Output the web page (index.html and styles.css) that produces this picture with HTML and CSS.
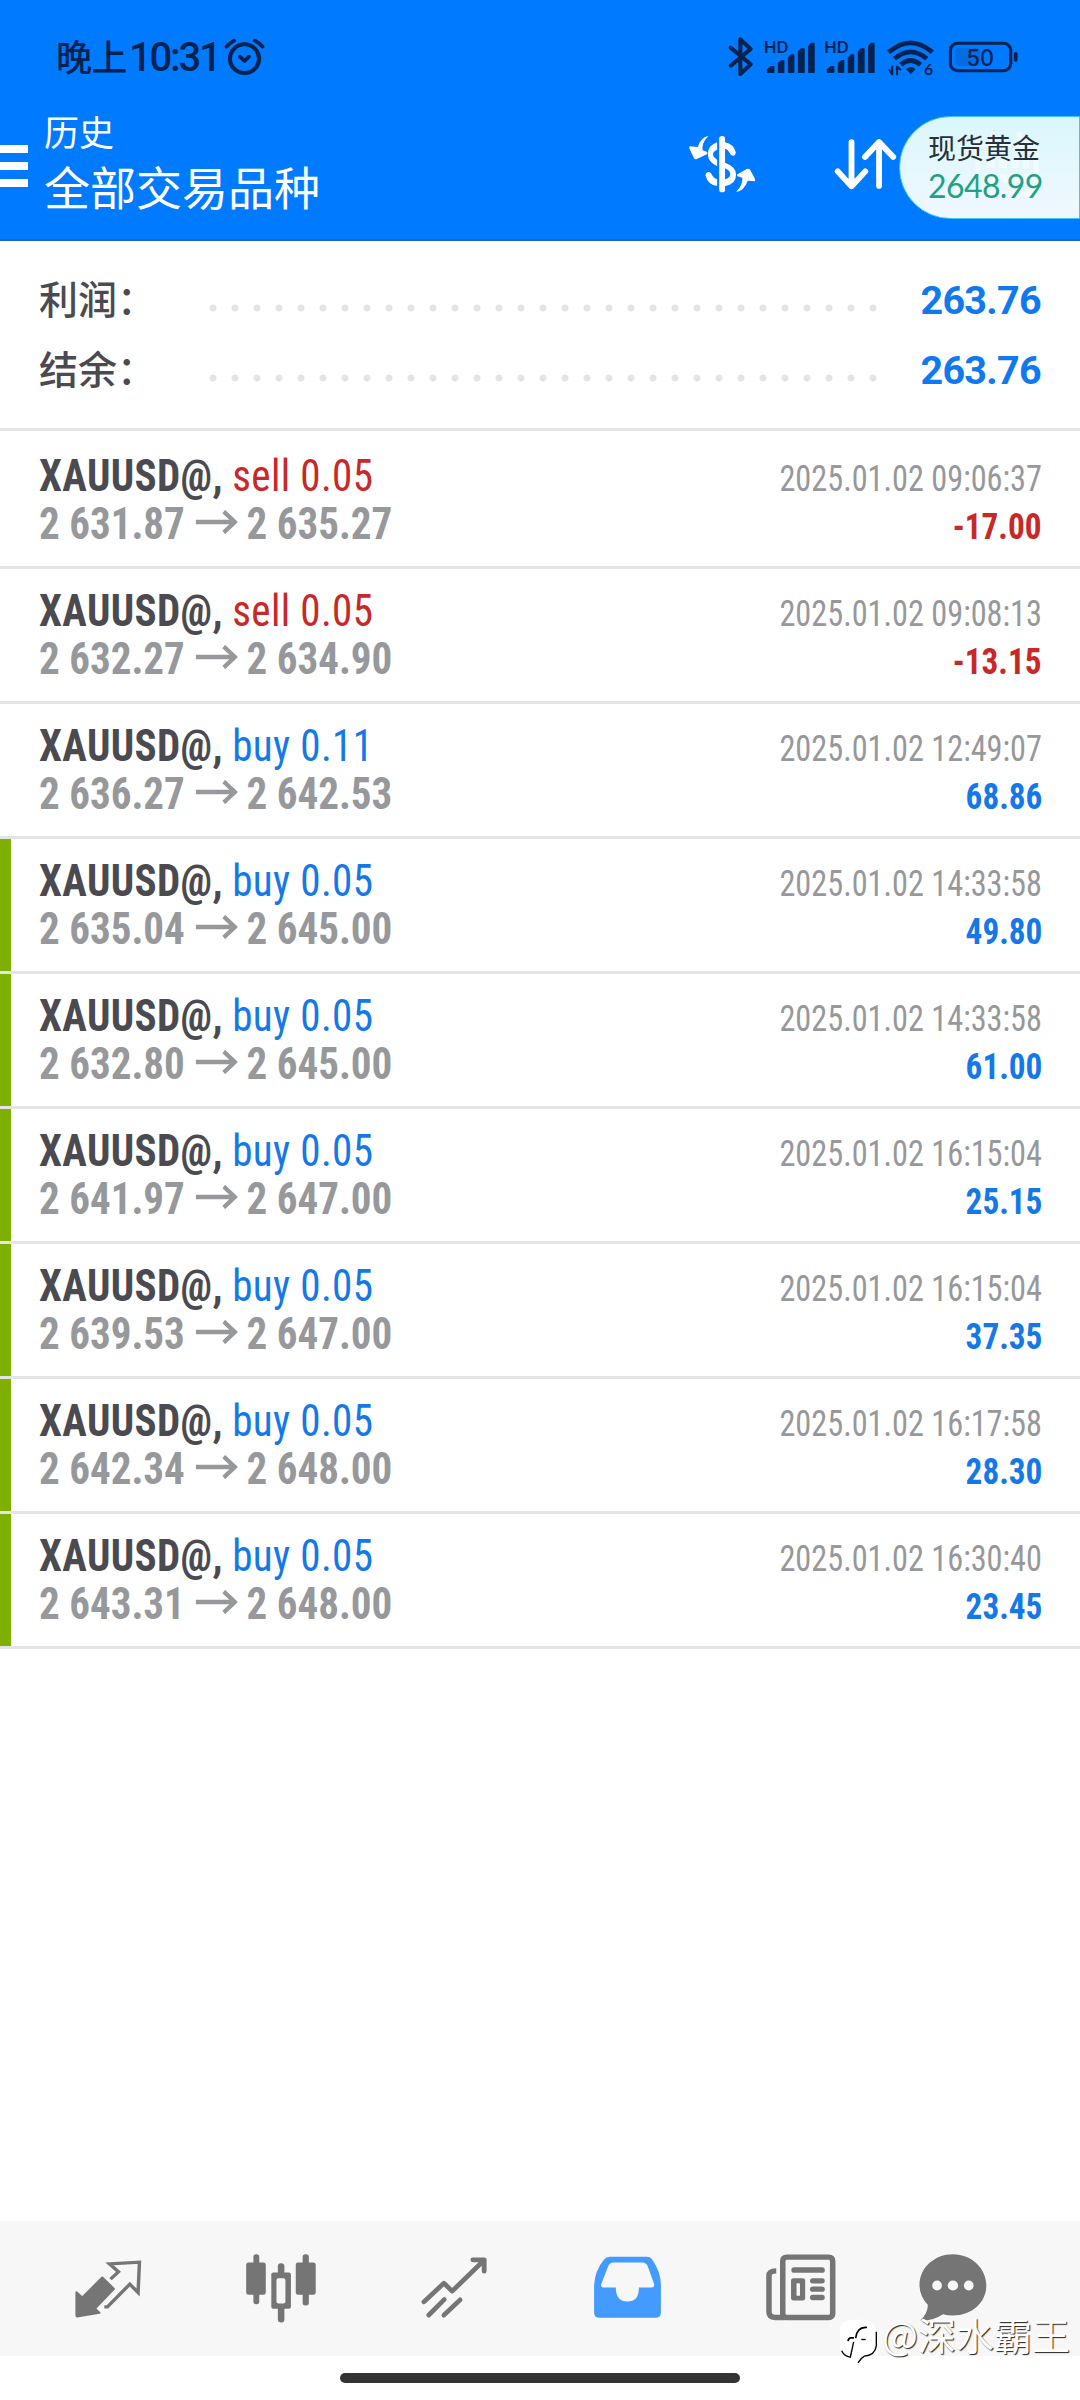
FILE: index.html
```html
<!DOCTYPE html>
<html lang="zh-CN">
<head>
<meta charset="utf-8">
<title>历史</title>
<link rel="stylesheet" href="styles.css">
</head>
<body>
<header class="header">
  <div class="status">
    <div class="clock">晚上<span class="time">10:31</span></div>
    <svg class="alarm" viewBox="645 105 130 132" preserveAspectRatio="none"><g fill="none" stroke="#02234f" stroke-linecap="round" stroke-linejoin="round"><ellipse cx="710" cy="176" rx="42" ry="43" stroke-width="12"/><path d="M697 170l13 13 13-13" stroke-width="11"/><path d="M658 140q9-11 22-18M762 140q-9-11-22-18" stroke-width="11"/></g></svg>
    <svg class="sysicons" viewBox="523 90 900 165" preserveAspectRatio="none">
      <g fill="none" stroke="#02234f" stroke-width="12" stroke-linejoin="round" stroke-linecap="round"><path d="M554 143l58 50-30 29v-104l30 29-58 50"/></g>
      <g fill="#02234f" stroke="#02234f" stroke-width="4" stroke-linejoin="round">
        <path id="sig" d="M661 217v-8l10-9h8v17zM693 217v-27l9-8h6v35zM722 217v-44l8-8h7v52zM751 217v-62l8-8h8v70zM781 217v-78l7-9h8v87z"/>
        <use href="#sig" x="174"/>
      </g>
      <g fill="#02234f" class="hd"><text x="651" y="159" textLength="71" lengthAdjust="spacingAndGlyphs">HD</text><text x="826" y="159" textLength="71" lengthAdjust="spacingAndGlyphs">HD</text></g>
      <g fill="none" stroke="#02234f" stroke-width="14"><path d="M1013 157q63-57 127 0M1030 176q46-41 93 0M1048 194q28-25 57 0"/></g>
      <path fill="#02234f" d="M1063 208q14-14 28 0l-14 14zM1010 208h6l4 5v-16h6v29h-5zM1034 226v-29h5l12 12-4 3-7-5v19z"/>
      <text class="six" x="1115" y="225" fill="#02234f">6</text>
      <rect x="1192" y="130" width="175" height="82" rx="21" fill="none" stroke="#02234f" stroke-width="9"/>
      <rect x="1207" y="144" width="70" height="54" rx="9" fill="#046de2"/>
      <rect x="1376" y="156" width="11" height="29" rx="5" fill="#02234f"/>
      <text class="batt" x="1239" y="197" fill="#02234f" textLength="80" lengthAdjust="spacingAndGlyphs">50</text>
    </svg>
  </div>
  <div class="appbar">
    <div class="menu"><i></i><i></i><i></i></div>
    <div class="titles"><div class="sub">历史</div><div class="main">全部交易品种</div></div>
    <svg class="hicon" viewBox="412 372 232.3 240" preserveAspectRatio="none"><g fill="#fff">
      <path d="M489 408q-22 3-31 33l-24-2q-2 3 0 8l13 28q3 4 8 2l29-14q4-4 0-8l-12-4q-4-22 17-43z"/>
      <path d="M569 576q23-4 34-34l21 2q1-3-1-9l-14-27q-3-3-9-1l-27 16q-3 3 0 6l14 4q3 20-18 43z"/>
      <rect x="520" y="408" width="17" height="169" rx="8"/>
      <path d="M514 427v22q-12 5-12 14t12 16v19q-27-12-27-36 0-25 27-35zM514 538v20q-26-2-34-32 0-8 7-10 8-1 11 6 4 12 16 16zM537 427q24 5 31 29 0 11-8 11-6 0-9-7-5-12-14-14zM537 488q32 12 32 36 0 28-32 34v-20q15-4 15-15 0-12-15-18z"/>
    </g></svg>
    <svg class="hicon" viewBox="827 372 232.3 240" preserveAspectRatio="none"><g fill="none" stroke="#fff" stroke-width="17" stroke-linecap="round" stroke-linejoin="round"><path d="M904 426v132M864 514l40 45 40-45M984 558v-132M943 471l41-45 41 45"/></g></svg>
  </div>
  <div class="pill">
    <svg class="ghost" viewBox="0 0 64 66"><path fill="none" stroke="#fff" stroke-width="5" d="M3 12h58v50H3zM18 0v12M44 0v12"/><path fill="none" stroke="#fff" stroke-width="8" stroke-dasharray="8 4" d="M12 32h42M12 46h42"/></svg>
    <div class="pname">现货黄金</div><div class="pval">2648.99</div>
  </div>
</header>
<section class="totals">
  <div class="total"><span class="label">利润：</span><span class="dots"></span><span class="sum">263.76</span></div>
  <div class="total"><span class="label">结余：</span><span class="dots"></span><span class="sum">263.76</span></div>
</section>
<main class="deals" id="deals"></main>
<nav class="nav">
  <svg viewBox="197.5 145.5 232.3 240" preserveAspectRatio="none"><path fill="#757575" stroke="#757575" stroke-width="6" stroke-linejoin="round" d="M297 231l34 34-55 59 13 13-65 11q-2 0-2-4v-69l17 16z"/><path fill="none" stroke="#757575" stroke-width="10" d="M321 236l23-22-26-24 87-5-4 91-24-25-65 68h-9"/></svg>
  <svg viewBox="700 145.5 232.3 240" preserveAspectRatio="none"><g fill="#757575"><rect x="715" y="186" width="57" height="97" rx="7"/><rect x="736" y="161" width="17" height="150" rx="8"/><rect x="859" y="186" width="58" height="97" rx="7"/><rect x="879" y="161" width="18" height="154" rx="8"/><rect x="788" y="216" width="57" height="109" rx="6"/><rect x="807" y="188" width="19" height="178" rx="9"/></g><rect x="803" y="233" width="26" height="76" rx="6" fill="#f7f7f7"/></svg>
  <svg viewBox="1202.2 145.5 232.3 240" preserveAspectRatio="none"><g fill="none" stroke="#757575" stroke-width="14" stroke-linecap="round" stroke-linejoin="round"><path d="M1231 304l58-56 24 24 93-93M1373 178h33v34"/><path d="M1245 344l45-47M1289 344l47-46"/></g></svg>
  <svg viewBox="136.4 145.5 232.3 240" preserveAspectRatio="none"><path fill="#439bff" fill-rule="evenodd" d="M203 169h107q10 0 14 6 27 38 27 80v81q0 16-16 16H173q-16 0-16-16v-81q2-45 29-78 6-8 17-8zM214 186q-11 0-15 9l-21 55q-3 11 7 11h35q0 42 34 42t33-42h35q12 0 9-11l-18-52q-4-12-17-12z"/></svg>
  <svg viewBox="638.9 145.5 232.3 240" preserveAspectRatio="none"><g fill="none" stroke="#757575"><path stroke-width="16" d="M717 170h121q12 0 12 12v157q0 12-12 12H717q-12 0-12-12V182q0-12 12-12z"/><path stroke-width="16" d="M686 211q-21 0-21 15v108q0 17 18 17h30"/></g><g fill="#757575"><rect x="730" y="200" width="97" height="17" rx="8"/><rect x="784" y="233" width="43" height="16" rx="8"/><rect x="784" y="258" width="43" height="16" rx="8"/><rect x="784" y="283" width="43" height="16" rx="8"/><rect x="729" y="233" width="41" height="67" rx="7"/></g><rect x="745" y="248" width="10" height="38" rx="2" fill="#f7f7f7"/></svg>
  <svg class="chat" viewBox="1083.1 145.5 232.3 240" preserveAspectRatio="none"><path fill="#757575" d="M1199 161c54 0 97 42 97 94s-43 90-97 90q-16 0-29-4-28 20-66 19 23-22 22-47-24-26-24-60c0-52 44-92 97-92z"/><g fill="#f7f7f7"><ellipse cx="1153" cy="255" rx="14" ry="15"/><ellipse cx="1199" cy="255" rx="15" ry="15"/><ellipse cx="1245" cy="255" rx="14" ry="15"/></g></svg>
</nav>
<div class="home"></div>
<div class="mark">
  <svg viewBox="27 25 123 140"><path fill="#fff" d="M62 30h42q33 4 33 36v40q-2 30-34 33-12 5-20 16l-5-14H66q-36-2-36-34V64q0-30 32-34z"/><g fill="none" stroke="#000" stroke-width="4"><path d="M139 66v42q-4 28-36 31-9 5-19 20M35 123q7 16 26 19l10-46"/><path stroke-width="5" d="M111 53q-30-3-34 32M54 94q1-9 8-10h10"/><path d="M94 89h13"/></g></svg>
  <span>@深水霸王</span>
</div>
<script src="deals.js"></script>
</body>
</html>
```
FILE: deals.js
```js
const deals = [
  ["sell", "0.05", "2 631.87", "2 635.27", "2025.01.02 09:06:37", "-17.00", false],
  ["sell", "0.05", "2 632.27", "2 634.90", "2025.01.02 09:08:13", "-13.15", false],
  ["buy", "0.11", "2 636.27", "2 642.53", "2025.01.02 12:49:07", "68.86", false],
  ["buy", "0.05", "2 635.04", "2 645.00", "2025.01.02 14:33:58", "49.80", true],
  ["buy", "0.05", "2 632.80", "2 645.00", "2025.01.02 14:33:58", "61.00", true],
  ["buy", "0.05", "2 641.97", "2 647.00", "2025.01.02 16:15:04", "25.15", true],
  ["buy", "0.05", "2 639.53", "2 647.00", "2025.01.02 16:15:04", "37.35", true],
  ["buy", "0.05", "2 642.34", "2 648.00", "2025.01.02 16:17:58", "28.30", true],
  ["buy", "0.05", "2 643.31", "2 648.00", "2025.01.02 16:30:40", "23.45", true]
];
const arrow = '<svg class="arrow" viewBox="0 0 45 24" preserveAspectRatio="none"><path d="M0 12h42M30 1.5l12 10.5-12 10.5" fill="none" stroke="#96989c" stroke-width="4.4"/></svg>';
document.getElementById("deals").innerHTML = deals.map(([side, lots, open, close, time, profit, tp]) => `
<article class="deal${tp ? " tp" : ""}">
  <div class="line"><span class="left"><b class="symbol">XAUUSD@,</b><span class="side ${side}">${side} ${lots}</span></span><span class="date">${time}</span></div>
  <div class="line"><span class="left prices">${open}${arrow}${close}</span><b class="profit ${profit[0] === "-" ? "sell" : "buy"}">${profit}</b></div>
</article>`).join("");
```
FILE: styles.css
```css
* { box-sizing: border-box; }
body {
  margin: 0;
  width: 1080px;
  height: 2400px;
  display: flex;
  flex-direction: column;
  background: #fff;
  overflow: hidden;
  font-family: Roboto, "Noto Sans CJK SC", sans-serif;
}
svg { display: block; flex: none; }
.header {
  position: relative;
  height: 241px;
  background: #007aff;
  border-bottom: 2px solid #2068b4;
}
.status { display: flex; height: 104px; color: #02234f; }
.clock {
  width: 168px;
  margin-left: 56px;
  padding-top: 30px;
  font: 500 36px/50px "Noto Sans CJK SC", sans-serif;
  letter-spacing: -0.5px;
  white-space: nowrap;
}
.time { font: 500 40px/50px Roboto, sans-serif; letter-spacing: -2.2px; margin-left: 2px; }
.alarm { width: 45px; height: 44px; margin: 35px 0 0 -2px; }
.sysicons { width: 310px; height: 55px; margin: 30px 0 0 453px; }
.hd { font: 600 46px Inter, sans-serif; }
.six { font: 700 46px Lato, sans-serif; }
.batt { font: 500 68px Inter, sans-serif; }
.appbar { display: flex; height: 135px; color: #fff; }
.menu { width: 28px; margin-top: 41px; display: flex; flex-direction: column; gap: 9px; }
.menu i { height: 8px; background: #fff; }
.titles { width: 637px; margin-right: 17px; padding-left: 16px; font-family: "Noto Sans CJK SC", sans-serif; }
.sub { font-size: 35px; line-height: 50px; margin-top: 2px; }
.main { font-size: 46px; line-height: 60px; margin-top: -1px; }
.hicon { width: 80px; height: 80px; margin-top: 20px; margin-right: 63px; }
.pill {
  position: absolute;
  top: 116px;
  right: 0;
  width: 181px;
  height: 103px;
  border: 1.5px solid #45c8e8;
  border-radius: 52px 0 0 52px;
  background: linear-gradient(#daf7fc, #f0f8ff);
  padding: 14px 0 0 28px;
}
.ghost { position: absolute; left: 75px; top: 15px; width: 64px; height: 66px; opacity: .5; }
.pname { position: relative; font: 28px/32px "Noto Sans CJK SC", sans-serif; color: #24303a; }
.pval { position: relative; font: 32px/40px Lato, sans-serif; color: #1fa184; margin-top: 3px; letter-spacing: -0.6px; }
.totals { height: 190px; padding: 23px 39px 0 39px; border-bottom: 3px solid #e4e4e4; }
.total { display: flex; height: 70px; line-height: 70px; align-items: center; }
.label { width: 163px; font: 500 39px/70px "Noto Sans CJK SC", sans-serif; color: #4a4a50; margin-top: -4px; }
.dots {
  width: 682px;
  height: 8px;
  margin-top: 18px;
  background: radial-gradient(circle at center, #e4e4e4 3.2px, transparent 3.9px) 0 0 / 22px 8px;
}
.sum { flex: 1; text-align: right; font-weight: 700; font-size: 39.5px; letter-spacing: -0.7px; margin-top: 3px; color: #1079ef; }
.deals { padding-top: 3px; flex: 1; font-family: "Roboto Condensed", Roboto, sans-serif; font-stretch: 75%; }
.deal { height: 135px; padding: 18px 38px 0 39px; border-bottom: 3px solid #e4e4e4; }
.tp { background: linear-gradient(#7fb000, #7fb000) 0 0 / 11px 132px no-repeat; }
.line { display: flex; height: 48px; line-height: 48px; justify-content: space-between; align-items: baseline; white-space: nowrap; font-size: 44px; }
.left { transform: scaleX(.933); transform-origin: left; }
.symbol { font-weight: 700; color: #4a4a50; margin-right: 10px; letter-spacing: 0.4px; }
.side { letter-spacing: 0.4px; }
.sell { color: #c82828; }
.buy { color: #1478e8; }
.date { font-size: 36.5px; color: #96989c; transform: scaleX(.884); transform-origin: right; }
.prices { font-weight: 700; color: #96989c; }
.arrow { display: inline-block; width: 45px; height: 24px; margin: 0 9px 0 12px; vertical-align: 5px; }
.profit { font-size: 36.5px; font-weight: 700; transform: scaleX(.91); transform-origin: right; }
.nav { display: flex; align-items: center; gap: 93px; height: 135px; margin-bottom: 17px; padding-left: 68px; background: #f7f7f7; }
.nav svg { width: 80px; height: 80px; }
.nav .chat { margin-left: -20px; }
.home { width: 400px; height: 10px; margin: 0 0 17px 340px; border-radius: 5px; background: #333; }
.mark { position: absolute; left: 839px; top: 2306px; display: flex; color: #fff; }
.mark svg { width: 41px; height: 47px; margin-top: 12px; }
.mark span { font: 38px/56px "Noto Sans CJK SC", sans-serif; text-shadow: 1px 1px 1px #222; margin-left: 2px; }
```
